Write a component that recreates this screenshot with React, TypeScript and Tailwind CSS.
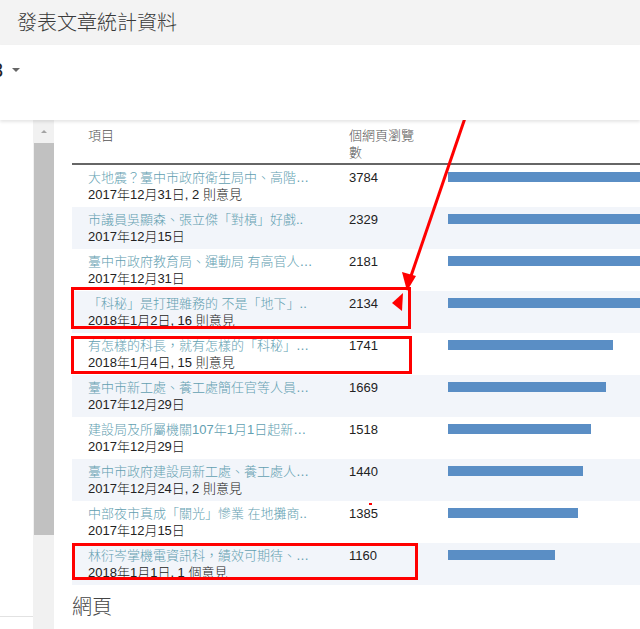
import React from 'react';

const rows = [
  { title: '大地震？臺中市政府衛生局中、高階…', meta: '2017年12月31日, 2 則意見', views: 3784 },
  { title: '市議員吳顯森、張立傑「對槓」好戲..', meta: '2017年12月15日', views: 2329 },
  { title: '臺中市政府教育局、運動局 有高官人…', meta: '2017年12月31日', views: 2181 },
  { title: '「科秘」是打理雜務的 不是「地下」..', meta: '2018年1月2日, 16 則意見', views: 2134 },
  { title: '有怎樣的科長，就有怎樣的「科秘」…', meta: '2018年1月4日, 15 則意見', views: 1741 },
  { title: '臺中市新工處、養工處簡任官等人員…', meta: '2017年12月29日', views: 1669 },
  { title: '建設局及所屬機關107年1月1日起新…', meta: '2017年12月29日', views: 1518 },
  { title: '臺中市政府建設局新工處、養工處人…', meta: '2017年12月24日, 2 則意見', views: 1440 },
  { title: '中部夜市真成「關光」慘業 在地攤商..', meta: '2017年12月15日', views: 1385 },
  { title: '林衍岑掌機電資訊科，績效可期待、…', meta: '2018年1月1日, 1 個意見', views: 1160 },
];

// chart axis doesn't start at zero, roughly 10 views per px
const barWidth = (v: number) => Math.round((v - 90) / 10);

export default function App() {
  return (
    <div className="relative w-[640px] h-[629px] overflow-hidden bg-white flex flex-col font-['Liberation_Sans','Noto_Sans_CJK_TC',sans-serif]">
      <header className="h-[45px] shrink-0 bg-[#f3f3f3] flex items-center px-[17px]">
        <h1 className="text-[20px] leading-[24px] font-light text-[#3a3a3a]">發表文章統計資料</h1>
      </header>

      <div className="relative z-10 h-[75px] shrink-0 bg-white shadow-[0_2px_3px_rgba(0,0,0,0.10)] pt-[13px]">
        <div className="flex items-center ml-[-8px] gap-[9px]">
          <span className="text-[20px] leading-[24px] text-[#222]">3</span>
          <span className="w-0 h-0 border-l-[4px] border-r-[4px] border-t-[4px] border-l-transparent border-r-transparent border-t-[#666]" />
        </div>
      </div>

      <div className="flex flex-1 min-h-0">
        <div className="w-[33px] shrink-0 flex flex-col">
          <div className="flex-1" />
          <div className="h-[13px] border-t border-[#e2e2e2]" />
        </div>

        <div className="w-[21px] shrink-0 bg-[#f1f1f1] flex flex-col">
          <div className="h-[23px] flex items-center justify-center">
            <span className="w-0 h-0 border-l-[3px] border-r-[3px] border-b-[3px] border-l-transparent border-r-transparent border-b-[#a3a3a3]" />
          </div>
          <div className="ml-px h-[392px] bg-[#c1c1c1]" />
        </div>

        <div className="w-[18px] shrink-0" />

        <main className="flex-1 min-w-0 overflow-hidden">
          <div className="h-[45px] flex border-b-2 border-[#666] text-[13px] leading-[17px] font-light text-[#555] pt-[7px]">
            <div className="w-[277px] shrink-0 pl-[16px]">項目</div>
            <div className="w-[70px]">個網頁瀏覽數</div>
          </div>

          {rows.map((r, i) => (
            <div
              key={i}
              className={`h-[42px] flex text-[13px] leading-[17px] font-light ${i % 2 === 1 ? 'bg-[#f2f5fa]' : 'bg-white'}`}
            >
              <div className="w-[277px] shrink-0 pl-[16px] pr-[8px] pt-[4px] min-w-0">
                <div className="truncate text-[#62a0b1]">{r.title}</div>
                <div className="truncate text-[#222]">{r.meta}</div>
              </div>
              <div className="w-[99px] shrink-0 pt-[4px] text-[#222]">{r.views}</div>
              <div className="flex-1 min-w-0 pt-[7px]">
                <div className="h-[10px] bg-[#5a8ec5]" style={{ width: barWidth(r.views) }} />
              </div>
            </div>
          ))}

          <h2 className="mt-[10px] text-[20px] leading-[24px] font-light text-[#444]">網頁</h2>
        </main>
      </div>

      {/* red annotations drawn over the screenshot */}
      <div className="absolute left-[406px] top-[99px] text-[16px] leading-[17px] text-[#ff0000] font-light whitespace-nowrap">
        讀者點閱率公佈如下：
      </div>
      <div className="absolute left-[71px] top-[287px] w-[340px] h-[42px] border-[3px] border-[#ff0000]" />
      <div className="absolute left-[71px] top-[336px] w-[341px] h-[38px] border-[3px] border-[#ff0000]" />
      <div className="absolute left-[72px] top-[543px] w-[346px] h-[37px] border-[3px] border-[#ff0000]" />
      <div className="absolute left-[369px] top-[503px] w-[3px] h-[2px] bg-[#ff0000]" />
      <svg className="absolute left-0 top-0 pointer-events-none" width="640" height="629" viewBox="0 0 640 629">
        <line x1="465" y1="118" x2="411" y2="276" stroke="#ff0000" strokeWidth="3" />
        <polygon points="407,291 402,272 416,276" fill="#ff0000" />
        <polygon points="392,303 403,293 402,311" fill="#ff0000" />
      </svg>
    </div>
  );
}
